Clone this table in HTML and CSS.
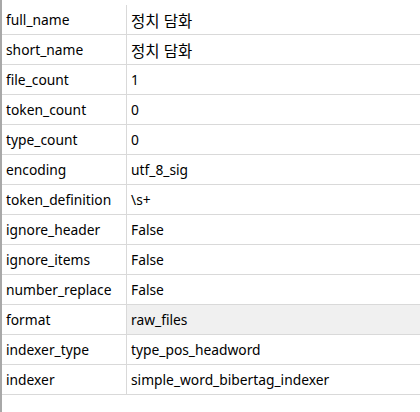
FILE: index.html
```html
<!DOCTYPE html>
<html lang="ko">
<head>
    <meta charset="UTF-8">
    <title>Corpus info</title>
    <link rel="stylesheet" href="styles.css">
</head>
<body>
    <div class="grid-frame">
        <table class="prop-table">
            <tr><td class="key">full_name</td><td class="val"><span class="ko">정치 담화</span></td></tr>
            <tr><td class="key">short_name</td><td class="val"><span class="ko">정치 담화</span></td></tr>
            <tr><td class="key">file_count</td><td class="val">1</td></tr>
            <tr><td class="key">token_count</td><td class="val">0</td></tr>
            <tr><td class="key">type_count</td><td class="val">0</td></tr>
            <tr><td class="key">encoding</td><td class="val">utf_8_sig</td></tr>
            <tr><td class="key">token_definition</td><td class="val">\s+</td></tr>
            <tr><td class="key">ignore_header</td><td class="val">False</td></tr>
            <tr><td class="key">ignore_items</td><td class="val">False</td></tr>
            <tr><td class="key">number_replace</td><td class="val">False</td></tr>
            <tr><td class="key">format</td><td class="val selected">raw_files</td></tr>
            <tr><td class="key">indexer_type</td><td class="val">type_pos_headword</td></tr>
            <tr><td class="key">indexer</td><td class="val">simple_word_bibertag_indexer</td></tr>
        </table>
    </div>
</body>
</html>
```

FILE: styles.css
```css
html, body {
    margin: 0;
    height: 100%;
    background: #ffffff;
}
.grid-frame {
    box-sizing: border-box;
    height: 100%;
    padding-top: 5px;
    border-left: 2px solid #a8a8a8;
    font-family: "Noto Sans", "Noto Sans CJK KR", sans-serif;
    font-size: 13.8px;
    color: #000000;
}
.prop-table {
    width: 100%;
    border-collapse: collapse;
}
.prop-table td {
    height: 29px;
    padding: 0 0 0 4px;
    border-bottom: 1px solid #d9d9d9;
    white-space: nowrap;
}
.key {
    width: 120px;
    border-right: 1px solid #d9d9d9;
}
.val {
    padding-left: 4px;
}
.ko {
    font-family: "Noto Sans CJK KR", sans-serif;
    font-size: 15.5px;
}
.selected {
    background: #f0f0f0;
}
```
